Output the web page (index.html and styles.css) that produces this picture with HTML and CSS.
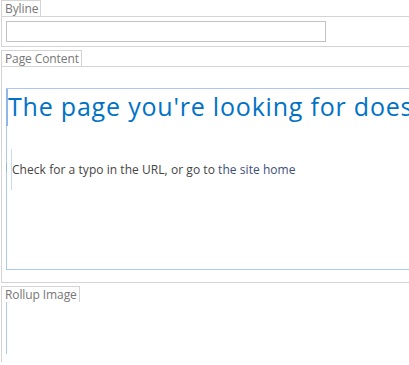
FILE: index.html
```html
<!DOCTYPE html>
<html>
<head>
<meta charset="utf-8">
<link rel="stylesheet" href="styles.css">
</head>
<body>
<div class="field field-byline">
  <div class="label">Byline</div>
  <div class="panel">
    <input class="text-input" type="text">
  </div>
</div>
<div class="field field-content">
  <div class="label">Page Content</div>
  <div class="panel">
    <div class="editor">
      <h1 class="title">The page you're looking for doesn't exist</h1>
      <div class="body-wrap">
        <p class="msg">Check for a typo in the URL, or go to <a class="link" href="#">the site home</a></p>
      </div>
    </div>
  </div>
</div>
<div class="field field-rollup">
  <div class="label">Rollup Image</div>
  <div class="panel panel-open">
    <div class="image-slot"></div>
  </div>
</div>
</body>
</html>
```
FILE: styles.css
```css
html, body {
  margin: 0;
  padding: 0;
  background: #fff;
  overflow: hidden;
  width: 409px;
  height: 365px;
}
body {
  font-family: "Open Sans", "Liberation Sans", sans-serif;
  color: #444;
}
.field {
  display: flex;
  flex-direction: column;
  align-items: flex-start;
  margin-left: 1px;
  margin-bottom: 3px;
}
.label {
  height: 15px;
  line-height: 15px;
  padding: 0 2px 0 3px;
  border: 1px solid #d4d4d4;
  border-bottom: none;
  font-size: 12px;
  letter-spacing: -0.1px;
  color: #777;
  white-space: nowrap;
}
.panel {
  align-self: stretch;
  border-top: 1px solid #d4d4d4;
  border-left: 1px solid #d4d4d4;
  border-bottom: 1px solid #d4d4d4;
  width: 440px;
}
.field-byline .panel {
  padding: 4px 0 4px 4px;
  height: 21px;
}
.text-input {
  display: block;
  box-sizing: border-box;
  width: 320px;
  height: 21px;
  margin: 0;
  border: 1px solid #c2c2c2;
  background: #fff;
  padding: 0;
}
.field-content .panel {
  padding: 21px 0 12px 4px;
}
.editor {
  position: relative;
  box-sizing: border-box;
  height: 182px;
  border: 1px solid #a9c9f2;
  border-right: none;
  width: 436px;
}
.editor::before {
  content: "";
  position: absolute;
  left: -1px;
  top: 0;
  width: 2px;
  height: 37px;
  background: #8fb6ea;
}
.title {
  margin: 0;
  padding: 3px 0 0 1px;
  font-family: "Open Sans", "Liberation Sans", sans-serif;
  font-weight: normal;
  font-size: 25px;
  line-height: 29px;
  letter-spacing: 0.8px;
  color: #0072c6;
  white-space: nowrap;
}
.body-wrap {
  position: relative;
  margin-top: 28px;
  margin-left: 4px;
  padding-left: 0;
  border-left: 1px solid #c9dcf5;
  height: 41px;
}
.body-wrap::before {
  content: "";
  position: absolute;
  left: -6px;
  top: 14px;
  width: 1px;
  height: 9px;
  background: #8fb6ea;
}
.msg {
  margin: 0;
  padding-top: 13px;
  font-size: 12px;
  line-height: 16px;
  letter-spacing: 0.05px;
  color: #444;
  white-space: nowrap;
}
.link {
  color: #3b4f7a;
  text-decoration: none;
}
.panel-open {
  border-bottom: none;
  border-top: none;
  height: 60px;
  padding-left: 4px;
}
.image-slot {
  width: 1px;
  height: 52px;
  background: #a9c9f2;
}
```
